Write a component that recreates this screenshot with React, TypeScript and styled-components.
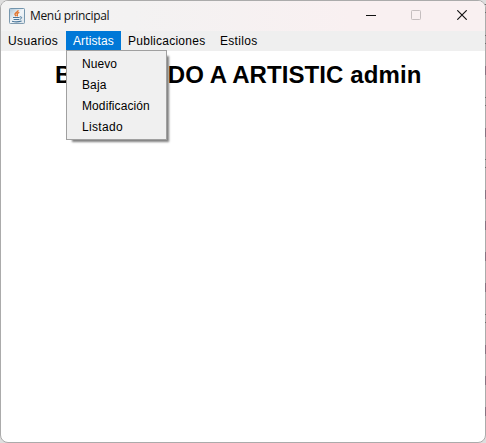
import React from "react";
import styled, { createGlobalStyle } from "styled-components";

const GlobalStyle = createGlobalStyle`
  html, body { margin: 0; padding: 0; background: #dedede; overflow: hidden; }
  *, *::before, *::after { box-sizing: border-box; }
`;

const Desktop = styled.div`
  position: relative;
  width: 486px;
  height: 443px;
`;

const Window = styled.main`
  display: flex;
  flex-direction: column;
  width: 486px;
  height: 443px;
  border: 1px solid #ababab;
  border-radius: 8px;
  background: #fff;
  overflow: hidden;
  font-family: "Liberation Sans", Arial, sans-serif;
  color: #000;
`;

const TitleBar = styled.header`
  display: flex;
  align-items: center;
  flex: 0 0 30px;
  padding-left: 8px;
  background: linear-gradient(90deg, #f3f3f3 0, #f3f2f2 130px, #f9f0f1 350px);
`;

const Title = styled.span`
  flex: 1;
  padding-left: 5px;
  font: 12px/16px "Open Sans", "Noto Sans", sans-serif;
  letter-spacing: -0.33px;
  color: #111;
`;

const Controls = styled.div`
  display: flex;
  align-self: stretch;
`;

const ControlButton = styled.button<{ $muted?: boolean }>`
  display: flex;
  align-items: center;
  justify-content: center;
  width: 46px;
  padding: 0 0 2px;
  border: 0;
  background: transparent;
  color: ${(p) => (p.$muted ? "#c5bebf" : "#111")};
`;

const MenuBar = styled.nav`
  display: flex;
  flex: 0 0 20px;
  background: #efefef;
`;

const MenuEntry = styled.div<{ $width: number; $active?: boolean }>`
  position: relative;
  width: ${(p) => p.$width}px;
  padding-left: 7px;
  font-size: 12px;
  line-height: 20px;
  white-space: nowrap;
  height: ${(p) => (p.$active ? 19 : 20)}px;
  background: ${(p) => (p.$active ? "#0078d7" : "transparent")};
  color: ${(p) => (p.$active ? "#fff" : "#000")};
`;

const EntryLabel = styled.span<{ $spacing: number }>`
  letter-spacing: ${(p) => p.$spacing}px;
`;

const Dropdown = styled.div`
  position: absolute;
  z-index: 2;
  top: 19px;
  left: 0;
  width: 101px;
  height: 90px;
  padding: 3px 0 2px;
  border: 1px solid #a0a0a0;
  background: #f0f0f0;
  box-shadow: 4px 4px 2px -2px rgba(0, 0, 0, 0.5);
`;

const DropdownItem = styled.div<{ $spacing: number }>`
  height: 21px;
  padding-left: 15px;
  line-height: 21px;
  letter-spacing: ${(p) => p.$spacing}px;
  color: #000;
`;

const Content = styled.section`
  flex: 1;
  padding: 10px 0 0 54px;
`;

const Heading = styled.h1`
  margin: 0;
  font-size: 24px;
  line-height: 28px;
  font-weight: 700;
  letter-spacing: 0.09px;
  white-space: nowrap;
`;

const HeadingStart = styled.span`
  letter-spacing: -0.08px;
`;

const EdgeMark = styled.i<{ $top: number; $small?: boolean }>`
  position: absolute;
  right: 0;
  top: ${(p) => p.$top}px;
  width: 1px;
  height: ${(p) => (p.$small ? 1 : 9)}px;
  background: ${(p) => (p.$small ? "#6c6c6c" : "#857582")};
`;

const JavaIcon = () => (
  <svg width="16" height="16" viewBox="0 0 16 16" fill="none">
    <defs>
      <linearGradient id="tile" x1="0" y1="0" x2="0" y2="1">
        <stop offset="0" stopColor="#7295ad" />
        <stop offset="1" stopColor="#7f9bb0" />
      </linearGradient>
      <linearGradient id="face" x1="0" y1="0" x2="1" y2="1">
        <stop offset="0" stopColor="#a9c4d6" />
        <stop offset="0.5" stopColor="#f1f5f8" />
        <stop offset="1" stopColor="#dce5eb" />
      </linearGradient>
    </defs>
    <rect x="0.5" y="0.5" width="15" height="15" rx="0.8" fill="url(#face)" stroke="url(#tile)" />
    <path d="M9.2 2.2C9.2 4.2 5.4 4.8 6 6.6c.2.7.8 1 1.1 1.6M10.3 4.4C8 5.3 7.8 5.9 8.3 6.5c.5.6.1 1.2-.3 1.7" stroke="#e2762f" strokeWidth="1.4" />
    <path d="M4 9.5h6.5M4.6 11.5h5.6M3 13.3c2.5.6 7 .6 9.6-.3" stroke="#4a779b" strokeWidth="1.1" />
    <path d="M10.8 8.9c2.6-.6 2.4 1.8 0 2.4" stroke="#4a779b" />
  </svg>
);

const MENUS = [
  { label: "Usuarios", width: 65, spacing: 0.36 },
  {
    label: "Artistas",
    width: 55,
    spacing: 0.1,
    items: [
      { text: "Nuevo", spacing: 0.05 },
      { text: "Baja", spacing: 0.1 },
      { text: "Modificación", spacing: 0.1 },
      { text: "Listado", spacing: 0.32 },
    ],
  },
  { label: "Publicaciones", width: 92, spacing: 0.26 },
  { label: "Estilos", width: 52, spacing: 0.3 },
];

const LARGE_MARKS = [66, 128, 190, 221, 252, 283, 345, 376, 407];
const SMALL_MARKS = [4, 12, 35, 43, 97, 105, 159, 167, 314, 322];

export default function App() {
  return (
    <>
      <GlobalStyle />
      <Desktop>
        <Window>
          <TitleBar>
            <JavaIcon />
            <Title>Menú principal</Title>
            <Controls>
              <ControlButton aria-label="Minimizar">
                <svg width="12" height="10" viewBox="0 0 12 10">
                  <path d="M2 5.5h10" stroke="currentColor" />
                </svg>
              </ControlButton>
              <ControlButton aria-label="Maximizar" $muted disabled>
                <svg width="10" height="10" viewBox="0 0 10 10" fill="none">
                  <rect x="0.5" y="0.5" width="9" height="9" rx="0.8" stroke="currentColor" />
                </svg>
              </ControlButton>
              <ControlButton aria-label="Cerrar">
                <svg width="10" height="10" viewBox="0 0 10 10">
                  <path d="M0.3 0.3l9.4 9.4M9.7 0.3L0.3 9.7" stroke="currentColor" strokeWidth="1.15" />
                </svg>
              </ControlButton>
            </Controls>
          </TitleBar>
          <MenuBar>
            {MENUS.map((menu) => (
              <MenuEntry key={menu.label} $width={menu.width} $active={!!menu.items}>
                <EntryLabel $spacing={menu.spacing}>{menu.label}</EntryLabel>
                {menu.items && (
                  <Dropdown>
                    {menu.items.map((item) => (
                      <DropdownItem key={item.text} $spacing={item.spacing}>
                        {item.text}
                      </DropdownItem>
                    ))}
                  </Dropdown>
                )}
              </MenuEntry>
            ))}
          </MenuBar>
          <Content>
            <Heading>
              <HeadingStart>BIENVENI</HeadingStart>DO A ARTISTIC admin
            </Heading>
          </Content>
        </Window>
        {LARGE_MARKS.map((top) => (
          <EdgeMark key={top} $top={top} />
        ))}
        {SMALL_MARKS.map((top) => (
          <EdgeMark key={top} $top={top} $small />
        ))}
      </Desktop>
    </>
  );
}
